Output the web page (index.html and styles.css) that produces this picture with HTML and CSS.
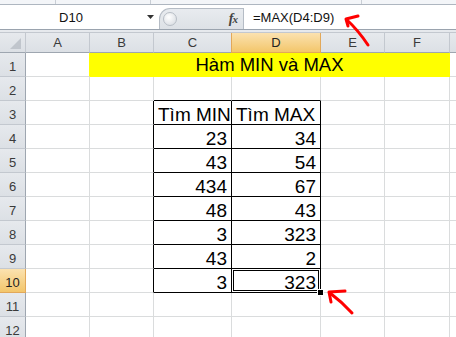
FILE: index.html
```html
<!DOCTYPE html>
<html>
<head>
<meta charset="utf-8">
<link rel="stylesheet" href="styles.css">
</head>
<body>
<div class="app">
  <div class="ribbon-edge">
    <div class="rseg w55"></div>
    <div class="rseg w95"></div>
    <div class="rseg w210"></div>
    <div class="rseg last"></div>
  </div>
  <div class="fbar">
    <div class="namebox">
      <span class="nb-text">D10</span>
      <svg class="dd" width="7" height="4" viewBox="0 0 7 4"><path d="M0 0H7L3.5 4Z" fill="#333"/></svg>
    </div>
    <div class="splitter">
      <div class="knob"></div>
      <span class="fx"><i>f</i><i class="x">x</i></span>
    </div>
    <div class="formula">=MAX(D4:D9)</div>
  </div>
  <div class="strip"></div>
  <div class="sheet">
    <div class="ch corner"><span class="tri"></span></div>
    <div class="ch">A</div><div class="ch">B</div><div class="ch">C</div><div class="ch act">D</div><div class="ch">E</div><div class="ch">F</div><div class="ch"></div>

    <div class="rh">1</div><div class="c yr"></div><div class="c title">Hàm MIN và MAX</div><div class="c"></div>

    <div class="rh">2</div><div class="c"></div><div class="c"></div><div class="c bb"></div><div class="c bb"></div><div class="c"></div><div class="c"></div><div class="c"></div>

    <div class="rh">3</div><div class="c"></div><div class="c br"></div><div class="c t">Tìm MIN</div><div class="c t">Tìm MAX</div><div class="c"></div><div class="c"></div><div class="c"></div>

    <div class="rh">4</div><div class="c"></div><div class="c br"></div><div class="c t num">23</div><div class="c t num">34</div><div class="c"></div><div class="c"></div><div class="c"></div>

    <div class="rh">5</div><div class="c"></div><div class="c br"></div><div class="c t num">43</div><div class="c t num">54</div><div class="c"></div><div class="c"></div><div class="c"></div>

    <div class="rh">6</div><div class="c"></div><div class="c br"></div><div class="c t num">434</div><div class="c t num">67</div><div class="c"></div><div class="c"></div><div class="c"></div>

    <div class="rh">7</div><div class="c"></div><div class="c br"></div><div class="c t num">48</div><div class="c t num">43</div><div class="c"></div><div class="c"></div><div class="c"></div>

    <div class="rh">8</div><div class="c"></div><div class="c br"></div><div class="c t num">3</div><div class="c t num">323</div><div class="c"></div><div class="c"></div><div class="c"></div>

    <div class="rh">9</div><div class="c"></div><div class="c br"></div><div class="c t num">43</div><div class="c t num">2</div><div class="c"></div><div class="c"></div><div class="c"></div>

    <div class="rh act">10</div><div class="c"></div><div class="c br"></div><div class="c t num">3</div><div class="c t num sel">323<span class="handle"></span></div><div class="c"></div><div class="c"></div><div class="c"></div>

    <div class="rh">11</div><div class="c"></div><div class="c"></div><div class="c"></div><div class="c"></div><div class="c"></div><div class="c"></div><div class="c"></div>

    <div class="rh">12</div><div class="c"></div><div class="c"></div><div class="c"></div><div class="c"></div><div class="c"></div><div class="c"></div><div class="c"></div>
  </div>
  <svg class="arrows" width="456" height="337" viewBox="0 0 456 337">
    <g fill="none" stroke="#ff0000" stroke-width="3" stroke-linecap="round" stroke-linejoin="round">
      <path d="M358 16 L346 19 L348 26"/>
      <path d="M347 20 Q358 30 368 45"/>
      <path d="M345 291 L329 292 L331 302"/>
      <path d="M330 293 Q342 302 352 313"/>
    </g>
  </svg>
</div>
</body>
</html>
```

FILE: styles.css
```css
html, body {
  margin: 0;
  padding: 0;
  background: #ffffff;
  overflow: hidden;
}

.app {
  position: relative;
  width: 456px;
  height: 337px;
  overflow: hidden;
  font-family: "Liberation Sans", Arial, sans-serif;
}

.ribbon-edge {
  display: flex;
  height: 4px;
  background: #f3f5f8;
  border-bottom: 1px solid #aeb6c0;
}

.rseg {
  border-right: 1px solid #c9ced5;
}

.w55 { width: 55px; }
.w95 { width: 94px; }
.w210 { width: 210px; }
.last { flex: 1; border-right: none; }

.fbar {
  display: flex;
  height: 24px;
  background: #ffffff;
  border-bottom: 1px solid #9aa3ae;
}

.namebox {
  width: 159px;
  display: flex;
  align-items: center;
  position: relative;
}

.nb-text {
  width: 142px;
  text-align: center;
  font-size: 13px;
  color: #111;
}

.dd {
  margin-left: 5px;
}

.splitter {
  width: 85px;
  margin-top: 3px;
  background: linear-gradient(#e8ebef, #dde1e6);
  border: 1px solid #b5bcc5;
  border-right: 1px solid #b5bcc5;
  border-bottom: none;
  border-radius: 11px 0 0 0;
  display: flex;
  align-items: center;
  box-sizing: border-box;
  padding-left: 3px;
}

.knob {
  width: 12px;
  height: 12px;
  border-radius: 50%;
  border: 1px solid #b8bec6;
  background: radial-gradient(circle at 40% 35%, #ffffff, #d3d8de);
}

.fx {
  margin-left: auto;
  margin-right: 6px;
  font-family: "Liberation Serif", "Times New Roman", serif;
  font-weight: bold;
  font-size: 14px;
  color: #444;
  letter-spacing: -1px;
}

.fx .x {
  font-size: 11px;
}

.formula {
  flex: 1;
  display: flex;
  align-items: center;
  padding-left: 9px;
  font-size: 13px;
  color: #111;
}

.strip {
  height: 2px;
  background: #e6e9ed;
  border-bottom: 1px solid #c3c8cf;
}

.sheet {
  display: grid;
  grid-template-columns: 26px 64px 64px 78px 89px 64px 65px 1fr;
  grid-template-rows: 20px repeat(12, 24px);
}

.ch, .rh {
  box-sizing: border-box;
  background: linear-gradient(#e6e9ed, #dce0e5);
  color: #3a3a3a;
  font-size: 13px;
  display: flex;
  justify-content: center;
}

.ch {
  align-items: center;
  border-right: 1px solid #c3c8cf;
  border-bottom: 1px solid #9ea6b0;
}

.rh {
  align-items: flex-end;
  padding-bottom: 2px;
  border-right: 1px solid #9ea6b0;
  border-bottom: 1px solid #c3c8cf;
}

.ch.act, .rh.act {
  background: linear-gradient(#fbe2b0, #f3c66b);
  border-color: #e2a85a;
  color: #222;
}

.ch.act {
  border-left: 1px solid #e2a85a;
  margin-left: -1px;
}

.corner {
  position: relative;
}

.tri {
  position: absolute;
  right: 4px;
  bottom: 3px;
  width: 0;
  height: 0;
  border-left: 11px solid transparent;
  border-bottom: 11px solid #c0c5cc;
}

.c {
  box-sizing: border-box;
  border-right: 1px solid #dadcdd;
  border-bottom: 1px solid #dadcdd;
  display: flex;
  align-items: flex-end;
  padding: 0 4px;
  font-size: 19px;
  line-height: 19px;
  color: #000;
  white-space: nowrap;
}

.c.yr {
  border-right-color: #ffff00;
}

.c.title {
  grid-column: span 5;
  background: #ffff00;
  border-color: #ffff00;
  justify-content: center;
  padding-bottom: 2px;
  font-size: 18.5px;
}

.c.bb { border-bottom-color: #000; }
.c.br { border-right-color: #000; }
.c.t {
  border-right-color: #000;
  border-bottom-color: #000;
}

.c.num {
  justify-content: flex-end;
}

.c.sel {
  position: relative;
  box-shadow: inset 0 0 0 1px #fff, inset 0 0 0 2px #000;
}

.handle {
  position: absolute;
  right: -4px;
  bottom: -4px;
  width: 5px;
  height: 5px;
  background: #000;
  border: 1px solid #fff;
  z-index: 2;
}

.arrows {
  position: absolute;
  left: 0;
  top: 0;
  pointer-events: none;
}
```
